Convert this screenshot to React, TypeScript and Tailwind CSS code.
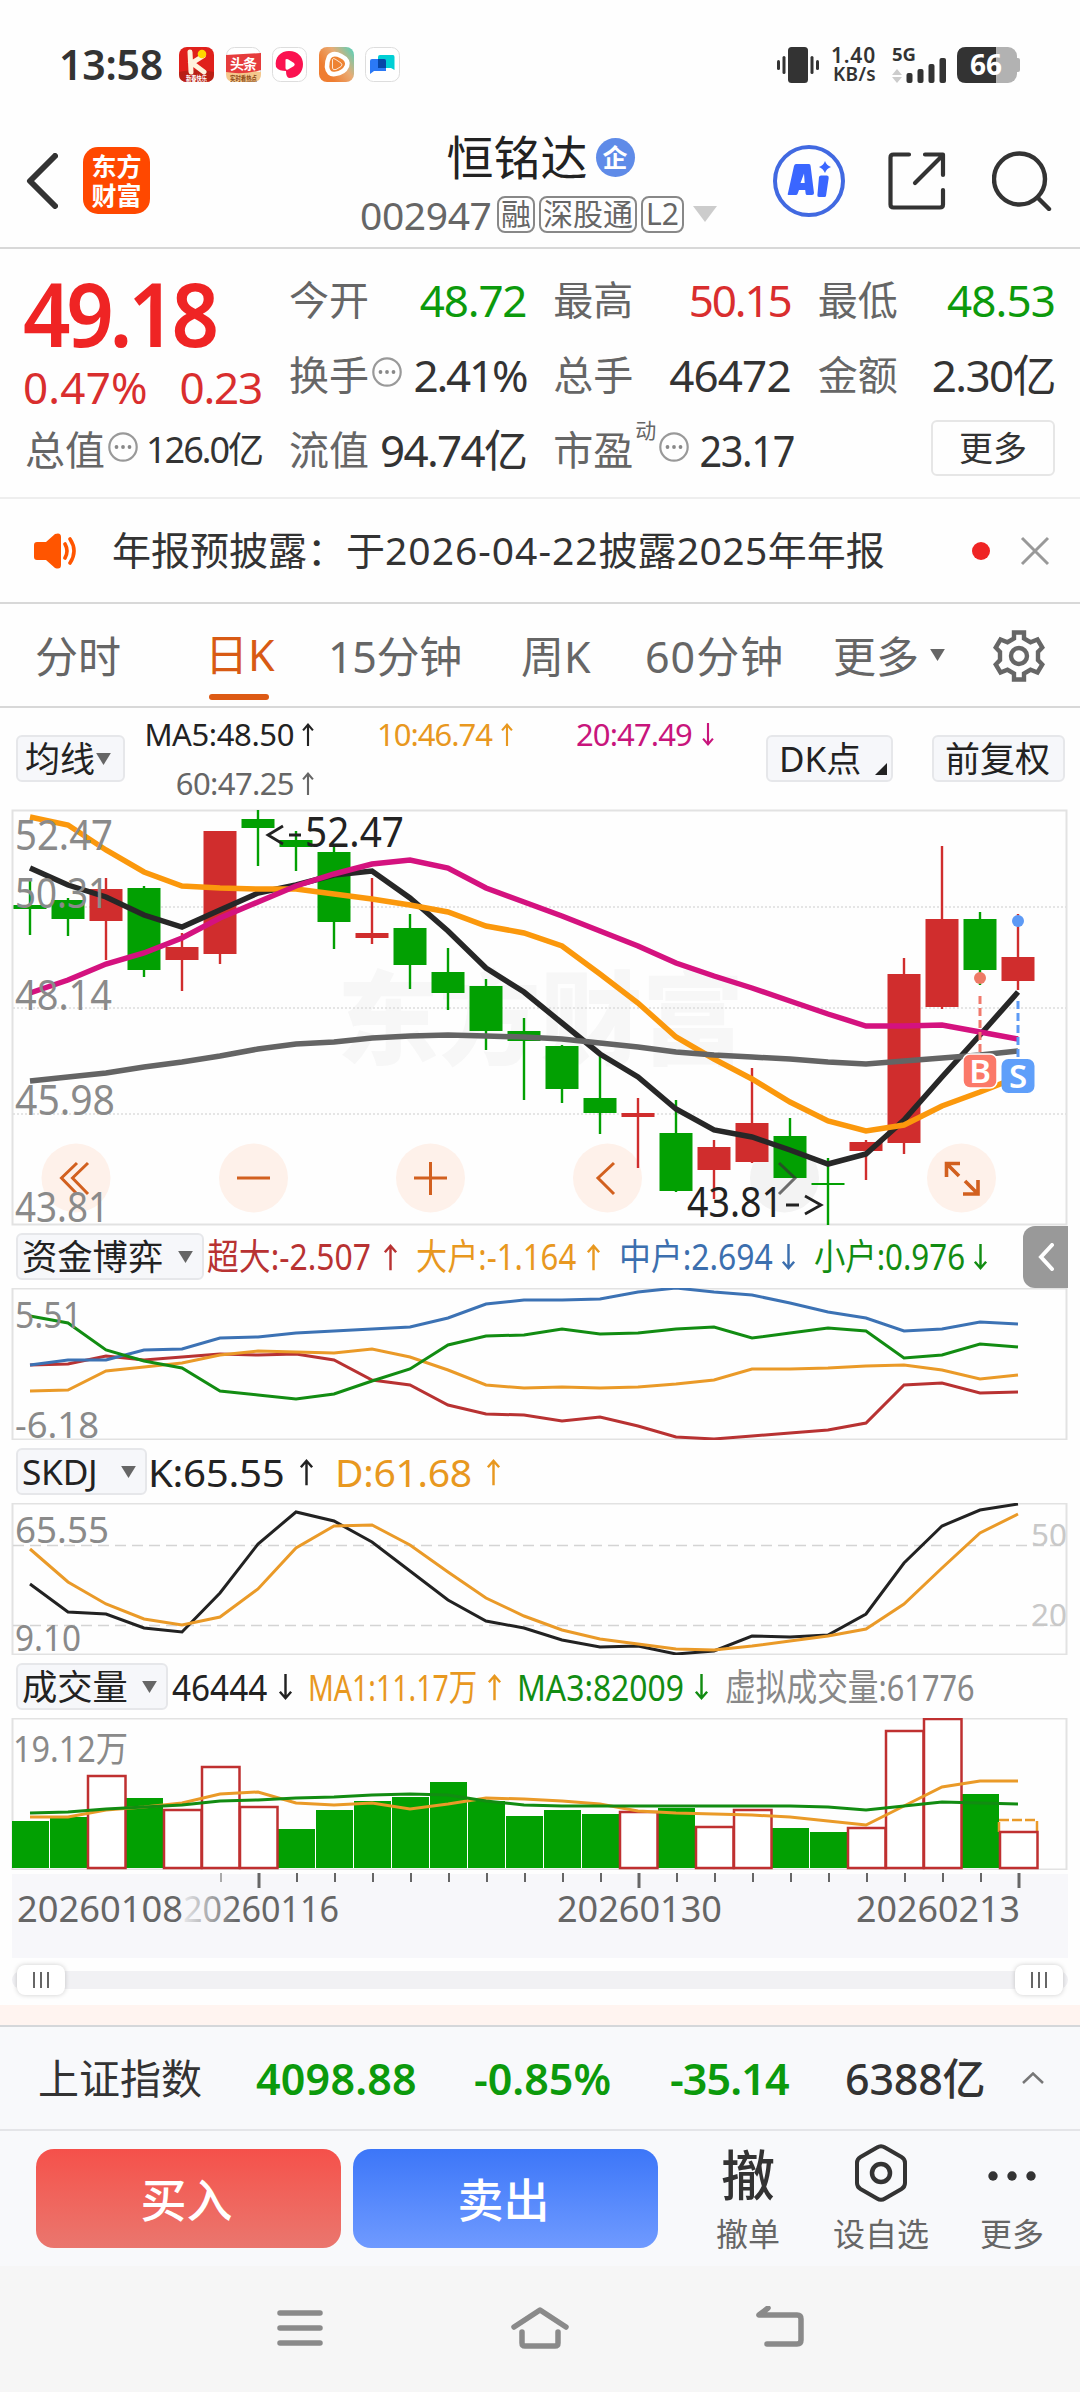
import type { ReactNode } from 'react';

const GREEN = '#02a002';
const RED = '#d02d2d';
const FONT = '"Noto Sans", "Noto Sans CJK SC", sans-serif';

// x centre of the n-th trading day, shared by every chart
const dayX = (i: number) => 30 + i * 38;

const toPoints = (values: number[]) => values.map((v, i) => `${dayX(i)},${v}`).join(' ');

// up?, high, body top, body bottom, low
const candles: [boolean, number, number, number, number][] = [
  [false, 70, 95, 99, 125],
  [false, 88, 90, 109, 126],
  [true, 68, 79, 111, 150],
  [false, 76, 78, 160, 167],
  [true, 123, 137, 150, 181],
  [true, 21, 21, 144, 154],
  [false, 0, 9, 18, 56],
  [false, 21, 30, 37, 61],
  [false, 37, 42, 112, 139],
  [true, 68, 123, 128, 134],
  [false, 104, 118, 155, 179],
  [false, 138, 162, 183, 200],
  [false, 169, 176, 221, 240],
  [false, 208, 221, 231, 290],
  [false, 235, 236, 279, 293],
  [false, 245, 288, 303, 324],
  [true, 288, 303, 307, 358],
  [false, 290, 323, 381, 382],
  [true, 330, 337, 360, 389],
  [true, 258, 313, 352, 353],
  [false, 308, 326, 368, 368],
  [false, 348, 373, 375, 415],
  [true, 330, 332, 341, 370],
  [true, 148, 164, 333, 344],
  [true, 36, 109, 197, 199],
  [false, 102, 109, 160, 175],
  [true, 104, 147, 171, 180],
];

const ma5 = [58, 75, 87, 105, 117, 100, 83, 75, 65, 61, 88, 121, 158, 182, 213, 244, 267, 299, 320, 327, 340, 354, 344, 310, 267, 225, 182];
const ma10 = [7, 15, 40, 62, 76, 78, 79, 79, 84, 89, 95, 102, 116, 123, 136, 164, 193, 227, 249, 269, 292, 311, 321, 315, 296, 282, 267];
const ma20 = [183, 170, 154, 143, 128, 108, 92, 76, 64, 54, 50, 58, 78, 92, 106, 121, 136, 153, 166, 178, 191, 204, 216, 216, 215, 222, 229];
const ma60 = [271, 267, 263, 257, 252, 246, 239, 234, 232, 228, 226, 225, 226, 227, 229, 233, 237, 242, 245, 247, 249, 252, 254, 251, 248, 245, 241];

const fundXL = [77, 76, 68, 72, 69, 66, 67, 66, 72, 92, 97, 117, 126, 127, 133, 129, 138, 149, 151, 148, 145, 142, 135, 97, 95, 105, 104];
const fundL = [103, 102, 83, 79, 75, 67, 63, 64, 65, 61, 69, 82, 97, 100, 99, 100, 99, 96, 92, 81, 81, 80, 78, 77, 82, 91, 87];
const fundM = [77, 72, 72, 62, 61, 50, 49, 45, 43, 41, 39, 30, 16, 12, 12, 11, 4, 0, 4, 7, 15, 24, 30, 43, 41, 34, 36];
const fundS = [28, 35, 62, 73, 80, 103, 107, 111, 106, 93, 81, 57, 48, 47, 41, 46, 45, 41, 39, 50, 45, 40, 43, 70, 67, 56, 59];

const skdjK = [81, 109, 111, 125, 129, 90, 41, 9, 18, 39, 68, 97, 118, 125, 137, 144, 143, 151, 148, 133, 134, 132, 111, 60, 23, 7, 1];
const skdjD = [46, 79, 101, 116, 122, 114, 86, 45, 23, 22, 42, 69, 95, 113, 127, 136, 141, 146, 147, 143, 138, 133, 126, 101, 65, 30, 11];

// up?, bar top
const volumes: [boolean, number][] = [
  [false, 103], [false, 99], [true, 58], [false, 80], [true, 92], [true, 49], [true, 89],
  [false, 111], [false, 92], [false, 83], [false, 79], [false, 64], [false, 83], [false, 98],
  [false, 92], [false, 96], [true, 94], [false, 90], [true, 109], [true, 92], [false, 110],
  [false, 114], [true, 110], [true, 13], [true, 1], [false, 76], [true, 114],
];
const volMa1 = [99, 99, 92, 89, 85, 76, 74, 85, 87, 85, 91, 86, 80, 81, 83, 86, 93, 95, 96, 97, 99, 103, 107, 88, 69, 63, 63];
const volMa3 = [95, 94, 91, 89, 87, 83, 82, 80, 79, 77, 76, 77, 83, 87, 88, 88, 88, 88, 88, 88, 88, 89, 92, 88, 84, 85, 86];

function Line({ values, color, width = 3 }: { values: number[]; color: string; width?: number }) {
  return <polyline points={toPoints(values)} fill="none" stroke={color} strokeWidth={width} />;
}

type LabelProps = { x: number; y: number; w: number; size?: number; color?: string; children: string };

function Label({ x, y, w, size = 36, color = '#8a8a8a', children }: LabelProps) {
  return (
    <text x={x} y={y} fontSize={size} fill={color} textLength={w} lengthAdjust="spacingAndGlyphs">
      {children}
    </text>
  );
}

function Frame({ height }: { height: number }) {
  return <rect x="12.5" y="0.5" width="1054" height={height - 1} fill="none" stroke="#e2e2e2" strokeWidth="2" />;
}

function Triangle({ className = '' }: { className?: string }) {
  return (
    <svg viewBox="0 0 16 13" className={`w-[15px] h-3 shrink-0 ${className}`}>
      <path d="M0 0H16L8 13Z" fill="currentColor" />
    </svg>
  );
}

function Arrow({ down = false, className = 'w-4 h-7' }: { down?: boolean; className?: string }) {
  return (
    <svg viewBox="0 0 16 28" className={`shrink-0 ${className} ${down ? 'rotate-180' : ''}`}>
      <path d="M8 28V2M2 9L8 2L14 9" fill="none" stroke="currentColor" strokeWidth="2.6" />
    </svg>
  );
}

function Dots() {
  return (
    <svg viewBox="0 0 30 30" className="w-[30px] h-[30px] mb-1.5 shrink-0">
      <circle cx="15" cy="15" r="13.7" fill="none" stroke="#999" strokeWidth="2.2" />
      <circle cx="8.5" cy="15" r="1.9" fill="#888" />
      <circle cx="15" cy="15" r="1.9" fill="#888" />
      <circle cx="21.5" cy="15" r="1.9" fill="#888" />
    </svg>
  );
}

function StatusBar() {
  return (
    <div className="h-[100px] pt-[29px] pl-[59px] pr-[60px] flex items-center justify-between text-[#333]">
      <div className="flex items-center h-9">
        <span className="w-[120px] text-[41px] font-semibold tracking-[-0.2px]">13:58</span>
        <div className="flex gap-[11.6px]">
          <svg viewBox="0 0 35 35" className="w-[35px] h-[35px]">
            <rect width="35" height="35" rx="8" fill="#e0201b" />
            <path d="M0 25Q17 21 35 25V27Q35 35 27 35H8Q0 35 0 27Z" fill="#b92016" />
            <path d="M11 5L12 25M24 9L13 16L25 25" stroke="#fff3dc" strokeWidth="5" strokeLinecap="round" fill="none" />
            <circle cx="23" cy="7" r="4.3" fill="#ffd800" />
            <text x="7" y="34" fontSize="7" fontWeight="700" fill="#fff" textLength="21" lengthAdjust="spacingAndGlyphs">新春快乐</text>
          </svg>
          <svg viewBox="0 0 35 35" className="w-[35px] h-[35px]">
            <rect x="0.5" y="0.5" width="34" height="34" rx="8" fill="#fff" stroke="#ddd" />
            <path d="M0 25Q17 22 35 25V27Q35 35 27 35H8Q0 35 0 27Z" fill="#f5c88c" />
            <path d="M0 8L35 6V23Q17 28 0 25Z" fill="#e63c3c" />
            <text x="4" y="22" fontSize="14" fontWeight="700" fill="#fff" textLength="27">头条</text>
            <text x="4" y="34" fontSize="6.5" fontWeight="700" fill="#8b4a16" textLength="27" lengthAdjust="spacingAndGlyphs">实时看热点</text>
          </svg>
          <svg viewBox="0 0 35 35" className="w-[35px] h-[35px]">
            <rect x="0.5" y="0.5" width="34" height="34" rx="8" fill="#fff" stroke="#ddd" />
            <path d="M4 20C2 10 9 4 17 4C26 4 31 10 31 17C31 25 26 31 17 31Q14 30 14 24C10 24 6 23 4 20Z" fill="#fb1250" />
            <path d="M13.5 12.5Q14.5 11.5 16 12.3L22 16Q23.5 17.5 22 19L16 22.5Q13.5 23.5 13.5 21Z" fill="#fff" />
          </svg>
          <svg viewBox="0 0 35 35" className="w-[35px] h-[35px]">
            <defs>
              <linearGradient id="play" x1="0" y1="0.8" x2="1" y2="0.1">
                <stop offset="0.2" stopColor="#ef7d31" />
                <stop offset="0.6" stopColor="#e9ab74" />
                <stop offset="1" stopColor="#5cd0b8" />
              </linearGradient>
            </defs>
            <rect width="35" height="35" rx="8" fill="url(#play)" />
            <path d="M10 10Q14 5 22 9Q30 13 28 19Q25 26 16 27Q9 28 8 20Q8 14 10 10Z" fill="#ee8332" stroke="#fff" strokeWidth="4.6" />
            <path d="M13.5 12.5Q14 11 16 12L22 16Q24 18 22 19.5L17 22.5Q13.5 23.500 13.5 21Z" fill="#ee8332" stroke="#fff" strokeWidth="0.8" />
          </svg>
          <svg viewBox="0 0 35 35" className="w-[35px] h-[35px]">
            <rect x="0.5" y="0.5" width="34" height="34" rx="8" fill="#fff" stroke="#ddd" />
            <path d="M13 10Q13 8 15 8H28Q29.5 8 29.5 10V23L26 21H13Z" fill="#00cfd5" />
            <path d="M5 14Q5 12 7 12H19Q21 12 21 14V24H9L5 27Z" fill="#2b79f6" />
            <path d="M13 12H19Q21 12 21 14V21H13Z" fill="#0646a8" />
          </svg>
        </div>
      </div>

      <div className="flex items-center h-9">
        <svg viewBox="0 0 42 36" className="w-[42px] h-9" fill="#333">
          <rect x="11" width="20" height="36" rx="3.5" />
          <rect x="0" y="13" width="3" height="10" rx="1.5" />
          <rect x="5.5" y="9" width="3" height="18" rx="1.5" />
          <rect x="33.5" y="9" width="3" height="18" rx="1.5" />
          <rect x="39" y="13" width="3" height="10" rx="1.5" />
        </svg>
        <div className="w-[45px] ml-[12px] flex flex-col items-end font-semibold">
          <span className="text-[21px] leading-[19px] tracking-[0.8px]">1.40</span>
          <span className="text-[19px] leading-[19px] tracking-[0.3px]">KB/s</span>
        </div>
        <svg viewBox="0 0 54 36" className="w-[54px] h-9 ml-4" fill="#333">
          <text x="0" y="14" fontSize="18.5" fontWeight="700" textLength="24">5G</text>
          <path d="M0 28L5 22L10 28ZM0 30H10L5 36Z" fill="#ccc" />
          <rect x="14.5" y="26" width="6" height="10" rx="2" />
          <rect x="25.5" y="22" width="6" height="14" rx="2" />
          <rect x="36.5" y="17" width="6" height="19" rx="2" />
          <rect x="47.5" y="11" width="6.5" height="25" rx="2" />
        </svg>
        <svg viewBox="0 0 63 36" className="w-[63px] h-9 ml-[11px]">
          <rect width="60" height="36" rx="9" fill="#b2b2b2" />
          <rect x="58" y="11" width="5" height="14" rx="2" fill="#b2b2b2" />
          <path d="M39 0H9Q0 0 0 9V27Q0 36 9 36H39Z" fill="#333" />
          <text x="13" y="27.5" fontSize="28" fontWeight="700" fill="#fff" textLength="32">66</text>
        </svg>
      </div>
    </div>
  );
}

function Tag({ children, className }: { children: ReactNode; className: string }) {
  return (
    <span className={`h-[37px] flex items-center justify-center border-2 border-[#888] rounded-lg text-[30px] text-[#666] ${className}`}>
      {children}
    </span>
  );
}

function Header() {
  return (
    <header className="h-[149px] border-b-2 border-[#d8d8d8] flex items-start pl-[26px] pr-[28px]">
      <div className="w-[334px] pt-[47px] flex items-center gap-[25px]">
        <svg viewBox="0 0 32 56" className="w-8 h-14">
          <path d="M29 3L4 28L29 53" fill="none" stroke="#333" strokeWidth="6" strokeLinecap="round" strokeLinejoin="round" />
        </svg>
        <div className="w-[67px] h-[67px] rounded-[15px] bg-[#ff4800] text-white text-[25px] leading-[29px] font-bold flex flex-col items-center justify-center">
          <span>东方</span>
          <span>财富</span>
        </div>
      </div>

      <div className="w-[357px] pt-[35px] flex flex-col items-center">
        <div className="h-[44px] ml-1 flex items-center gap-2">
          <h1 className="text-[47px] text-[#222]">恒铭达</h1>
          <span className="w-[39px] h-[39px] rounded-full bg-[#5f8be8] text-white text-[25px] font-bold flex items-center justify-center">企</span>
        </div>
        <div className="h-9 mt-[17px] flex items-center">
          <span className="w-[137px] text-[39px] text-[#666] tracking-[-0.4px]">002947</span>
          <Tag className="w-[38px]">融</Tag>
          <Tag className="w-[98px] ml-1">深股通</Tag>
          <Tag className="w-[43px] ml-1">L2</Tag>
          <svg viewBox="0 0 24 16" className="w-6 h-4 ml-[9px]">
            <path d="M0 0H24L12 16Z" fill="#ccc" />
          </svg>
        </div>
      </div>

      <div className="pt-[45px] ml-auto flex items-center">
        <svg viewBox="0 0 72 72" className="w-[72px] h-[72px]">
          <circle cx="36" cy="36" r="34" fill="none" stroke="#4169e1" strokeWidth="4" />
          <path fillRule="evenodd" d="M23 19H36Q37.5 19 37.6 21L41 48Q41 50 39 50H34Q33 50 32.7 49L32.2 45H26L24.5 49Q24 50 23 50H16Q14 50 15 48L21 21Q21.6 19 23 19ZM27.5 38H31.7L31 28.5Z" fill="#3a66ff" />
          <path d="M48 30.5H54Q56 30.5 55.7 33L53 51Q52.8 52 51.5 52H46Q44 52 44.4 50L46 32Q46.3 30.5 48 30.5Z" fill="#3a66ff" />
          <path d="M52 16Q53.5 20.5 58 22Q53.5 23.5 52 28Q50 23.5 46 22Q50.5 20.5 52 16Z" fill="#3a66ff" />
        </svg>
        <svg viewBox="0 0 58 58" className="w-[58px] h-[58px] ml-[43px]" fill="none" stroke="#333" strokeWidth="4.2" strokeLinecap="round" strokeLinejoin="round">
          <path d="M21 2.5H5.5Q2.5 2.5 2.5 5.5V52.5Q2.5 55.5 5.5 55.5H52Q55 55.5 55 52.5V38" />
          <path d="M37 2.5H55V23M54 4L27 31" />
        </svg>
        <svg viewBox="0 0 60 60" className="w-[60px] h-[60px] ml-[46px]" fill="none" stroke="#333" strokeWidth="4.4" strokeLinecap="round">
          <circle cx="27.5" cy="28" r="25.5" />
          <path d="M46 47L57 58" />
        </svg>
      </div>
    </header>
  );
}

function Quote({ label, value, className = 'text-[#333] tracking-[-0.9px]', info = false }: { label: string; value: string; className?: string; info?: boolean }) {
  return (
    <div className="h-[75px] flex items-center whitespace-nowrap">
      <span className="text-[40px] text-[#666]">{label}</span>
      {info && <span className="ml-[3px]"><Dots /></span>}
      <span className={`ml-auto text-[44px] ${className}`}>{value}</span>
    </div>
  );
}

function QuotePanel() {
  return (
    <section className="h-[250px] pt-[13px] pl-[25px] pr-[25px] border-b-2 border-[#eee] flex gap-[27px]">
      <div className="w-[237px]">
        <div className="h-[100px] flex items-center text-[89px] font-semibold text-[#ef2424] tracking-[-4.6px]">
          <span className="-ml-0.5 origin-left scale-x-[0.935]">49.18</span>
        </div>
        <div className="h-[50px] flex items-center justify-between text-[44px] text-[#d92e2e]">
          <span className="-ml-0.5 tracking-[0.2px]">0.47%</span>
          <span className="tracking-[-1.2px]">0.23</span>
        </div>
        <div className="h-[75px] flex items-center whitespace-nowrap">
          <span className="text-[40px] text-[#666]">总值</span>
          <span className="ml-[3px]"><Dots /></span>
          <span className="ml-auto text-[36px] tracking-[-2px] text-[#333]">126.0亿</span>
        </div>
      </div>
      <div className="flex-1 grid grid-cols-3 gap-x-[27px] content-start">
        <Quote label="今开" value="48.72" className="text-[#0c9a0c] tracking-[-1.2px]" />
        <Quote label="最高" value="50.15" className="text-[#d92e2e] tracking-[-2.1px]" />
        <Quote label="最低" value="48.53" className="text-[#0c9a0c] tracking-[-0.9px]" />
        <Quote label="换手" value="2.41%" className="text-[#333] tracking-[-2.2px]" info />
        <Quote label="总手" value="46472" />
        <Quote label="金额" value="2.30亿" className="text-[#333] tracking-[-1.6px]" />
        <Quote label="流值" value="94.74亿" className="text-[#333] tracking-[-1.7px]" />
        <div className="h-[75px] flex items-center whitespace-nowrap">
          <span className="text-[40px] text-[#666]">市盈</span>
          <span className="w-[22px] ml-0.5 mr-[3px] mb-[38px] text-[21px] text-[#666]">动</span>
          <Dots />
          <span className="ml-auto origin-right scale-x-[0.9] text-[44px] tracking-[-1.5px] text-[#333]">23.17</span>
        </div>
        <div className="h-[75px] flex items-center justify-end">
          <button className="w-[124px] h-[56px] mt-[-4px] border-2 border-[#e6e6e6] rounded-md text-[34px] text-[#333]">更多</button>
        </div>
      </div>
    </section>
  );
}

function Notice() {
  return (
    <section className="h-[105px] pl-[34px] pr-[30px] border-b-2 border-[#d8d8d8] flex items-center">
      <svg viewBox="0 0 45 36" className="w-[45px] h-9" fill="#ff5500">
        <path d="M3 9H12L21 1Q27 -1 27 4V32Q27 37 21 35L12 27H3Q0 27 0 24V12Q0 9 3 9Z" />
        <path d="M31 11Q35 18 31 25M36 6Q44 18 36 30" fill="none" stroke="#ff5500" strokeWidth="3.6" strokeLinecap="round" />
      </svg>
      <p className="ml-[33px] mb-0.5 text-[39px] text-[#333] whitespace-nowrap">
        年报预披露：于<span className="tracking-[1px]">2026-04-22</span>披露<span className="tracking-[0.5px]">2025</span>年年报
      </p>
      <span className="w-[18px] h-[18px] ml-auto rounded-full bg-[#ef2424]" />
      <svg viewBox="0 0 30 30" className="w-[30px] h-[30px] ml-[30px]">
        <path d="M2 2L28 28M28 2L2 28" stroke="#999" strokeWidth="3" />
      </svg>
    </section>
  );
}

function Tabs() {
  return (
    <nav className="h-[104px] pl-[35px] border-b-2 border-[#d8d8d8] flex items-center text-[43px] text-[#666] whitespace-nowrap">
      <span className="w-[169px] mt-0.5">分时</span>
      <span className="w-[124px] h-[78px] mt-[11px] pl-px flex flex-col justify-between text-[#d85a14]">
        <span className="mt-[11px]">日K</span>
        <span className="w-[60px] h-1.5 ml-1 rounded-full bg-[#dd5a14]" />
      </span>
      <span className="w-[193px] mt-0.5 tracking-[-0.3px]">15分钟</span>
      <span className="w-[124px] mt-0.5">周K</span>
      <span className="w-[188px] mt-0.5 tracking-[1px]">60分钟</span>
      <span className="w-[97px] mt-0.5">更多</span>
      <Triangle />
      <svg viewBox="0 0 52 52" className="w-[52px] h-[52px] ml-[48px] mt-0.5" fill="none" stroke="#666" strokeWidth="4.4">
        <path d="M21 2.5H31V8.5L37.5 12.2L44.5 9.5L49.3 17.5L45 22V30L49.3 34.5L44.5 42.5L37.5 39.8L31 43.5V49.5H21V43.5L14.5 39.8L7.5 42.5L2.7 34.5L7 30V22L2.7 17.5L7.5 9.5L14.5 12.2L21 8.5Z" />
        <circle cx="26" cy="26" r="8" />
      </svg>
    </nav>
  );
}

function MaLegend() {
  return (
    <div className="h-[102px] pl-[16px] pr-[15px] flex items-start whitespace-nowrap">
      <button className="w-[109px] h-[47px] mt-[27px] pl-[7px] flex items-center gap-0.5 border-2 border-[#e6e7ea] rounded-md bg-[#f6f7fa] text-[35px] text-[#222]">
        均线 <Triangle className="-ml-px text-[#666]" />
      </button>
      <div className="w-[174px] ml-4 mt-[11px] flex flex-col items-end gap-[18px] text-[31px]">
        <span className="flex items-center gap-[7px] tracking-[-0.4px] text-[#222]">MA5:48.50<Arrow className="w-3.5 h-[23px]" /></span>
        <span className="flex items-center gap-[7px] tracking-[-0.6px] text-[#666]">60:47.25<Arrow className="w-3.5 h-[23px]" /></span>
      </div>
      <span className="w-[137px] ml-[62px] mt-[11px] flex items-center justify-between text-[31px] tracking-[-1px] text-[#e8981f]">
        10:46.74<Arrow className="w-3.5 h-[23px]" />
      </span>
      <span className="w-[139px] ml-[62px] mt-[11px] flex items-center justify-between text-[31px] tracking-[-0.9px] text-[#c8157c]">
        20:47.49<Arrow down className="w-3.5 h-[23px]" />
      </span>
      <button className="w-[127px] h-[47px] ml-auto mt-[27px] pl-[11px] pr-1 flex items-center justify-between border-2 border-[#e6e7ea] rounded-md bg-[#f6f7fa] text-[35px] text-[#222]">
        DK点
        <svg viewBox="0 0 12 12" className="w-3 h-3 mt-[20px]"><path d="M12 0V12H0Z" fill="#222" /></svg>
      </button>
      <button className="w-[133px] h-[47px] ml-[39px] mt-[27px] pr-0.5 border-2 border-[#e6e7ea] rounded-md bg-[#f6f7fa] text-[35px] text-[#222]">前复权</button>
    </div>
  );
}

function CandleChart() {
  return (
    <svg viewBox="0 0 1080 415" className="block w-[1080px] h-[415px] overflow-visible">
      <text x="337" y="247" fontSize="102" fontWeight="900" fill="#f7f7f7" textLength="407">东方财富</text>
      <Frame height={415} />
      {[97, 198, 304].map((y) => (
        <path key={y} d={`M13 ${y}H1066`} stroke="#ddd" strokeWidth="1.5" strokeDasharray="2 2" />
      ))}

      {[76, 253.5, 430.5, 607.5, 961.5].map((x) => (
        <circle key={x} cx={x} cy="368" r="34.5" fill="#fef1ea" />
      ))}
      <circle cx="784.5" cy="368" r="34.5" fill="#f3f3f3" />

      {candles.map(([up, high, top, bottom, low], i) => (
        <g key={i} fill={up ? RED : GREEN}>
          <rect x={dayX(i) - 1.2} y={high} width="2.4" height={low - high} />
          <rect x={dayX(i) - 16.5} y={top} width="33" height={bottom - top} />
        </g>
      ))}

      <Line values={ma5} color="#272727" width={5.5} />
      <Line values={ma10} color="#fb980c" width={5.5} />
      <Line values={ma20} color="#d4127f" width={5.5} />
      <Line values={ma60} color="#646464" width={5.5} />

      {/* zoom and pan controls */}
      <g fill="none" stroke="#d2601f" strokeWidth="3">
        <path d="M77 353L61.5 368L77 384M88 353L72.5 368L88 384" />
        <path d="M237 368H270" />
        <path d="M414 368H447M430.5 352V385" />
        <path d="M614 353L598 368L614 384" />
        <path d="M946.500 367V353.5H960M947 354L959 366M978 370V384H963M977 383L965 371" strokeWidth="3.6" />
      </g>
      <path d="M779 353L795 368L779 384" fill="none" stroke="#333" strokeOpacity="0.7" strokeWidth="3" />

      <Label x={15} y={40} w={98} size={41}>52.47</Label>
      <Label x={15} y={98} w={94} size={41}>50.31</Label>
      <Label x={15} y={200} w={97} size={41}>48.14</Label>
      <Label x={15} y={305} w={100} size={41}>45.98</Label>
      <Label x={15} y={412} w={94} size={41}>43.81</Label>
      <path d="M283 16L268 25L283 34M289 25H301" fill="none" stroke="#222" strokeWidth="2.8" />
      <Label x={305} y={37} w={99} size={41} color="#222">52.47</Label>
      <Label x={687} y={407} w={96} size={41} color="#222">43.81</Label>
      <path d="M786 395H799M805 386L821 395L805 404" fill="none" stroke="#222" strokeWidth="2.8" />

      {/* buy / sell marks */}
      <circle cx="980" cy="168" r="6" fill="#ee7a66" />
      <circle cx="1018" cy="111" r="6" fill="#5d9af5" />
      <path d="M980 186V246" stroke="#f0796c" strokeWidth="3" strokeDasharray="8 4" />
      <path d="M1018 191V250" stroke="#5d9af5" strokeWidth="3" strokeDasharray="8 4" />
      <rect x="963" y="244" width="34" height="34" rx="7" fill="#fb7969" stroke="#fff" strokeWidth="1.5" />
      <rect x="1001.5" y="249" width="33" height="34" rx="7" fill="#5f9ffa" />
      <text x="980" y="273" fontSize="33" fontWeight="600" fill="#fff" textAnchor="middle">B</text>
      <text x="1018" y="278" fontSize="33" fontWeight="600" fill="#fff" textAnchor="middle">S</text>
    </svg>
  );
}

function Picker({ children, className }: { children: ReactNode; className: string }) {
  return (
    <button className={`h-[47px] pl-1 pr-[9px] flex items-center justify-between border-2 border-[#e6e7ea] rounded-md bg-[#f6f7fa] text-[35.3px] text-[#222] shrink-0 ${className}`}>
      {children}
      <Triangle className="text-[#666]" />
    </button>
  );
}

function Entry({ text, dir, className, scale }: { text: string; dir?: 'up' | 'down'; className: string; scale: string }) {
  return (
    <span className={`flex items-center justify-between shrink-0 ${className}`}>
      <span className="w-0"><span className={`inline-block origin-left ${scale}`}>{text}</span></span>
      {dir && <Arrow down={dir === 'down'} className="w-[15px] h-7" />}
    </span>
  );
}

function FundChart() {
  return (
    <section>
      <div className="h-[63px] pl-4 flex items-center text-[36px] whitespace-nowrap">
        <Picker className="w-[188px]">资金博弈</Picker>
        <Entry text="超大:-2.507" dir="up" className="w-[191px] ml-[3px] text-[#b83232]" scale="scale-x-[0.885]" />
        <Entry text="大户:-1.164" dir="up" className="w-[185px] ml-[18px] text-[#e8981f]" scale="scale-x-[0.865]" />
        <Entry text="中户:2.694" dir="down" className="w-[177px] ml-[18px] text-[#3c6fae]" scale="scale-x-[0.885]" />
        <Entry text="小户:0.976" dir="down" className="w-[174px] ml-[18px] text-[#128c12]" scale="scale-x-[0.870]" />
        <span className="w-[45px] h-[62px] ml-auto mr-3 rounded-l-xl bg-[#999] flex items-center justify-center">
          <svg viewBox="0 0 16 28" className="w-4 h-7">
            <path d="M14 2L3 14L14 26" fill="none" stroke="#fff" strokeWidth="4" strokeLinecap="round" />
          </svg>
        </span>
      </div>
      <svg viewBox="0 0 1080 152" className="block w-[1080px] h-[152px]">
        <Frame height={152} />
        <Line values={fundXL} color="#b83232" />
        <Line values={fundL} color="#ea9a28" />
        <Line values={fundM} color="#3c72b4" />
        <Line values={fundS} color="#128c12" />
        <Label x={15} y={40} w={67}>5.51</Label>
        <Label x={15} y={150} w={84}>-6.18</Label>
      </svg>
    </section>
  );
}

function SkdjChart() {
  return (
    <section>
      <div className="h-[63px] pl-4 flex items-center text-[38px] tracking-[-0.3px] whitespace-nowrap">
        <Picker className="w-[131px]">SKDJ</Picker>
        <Entry text="K:65.55" dir="up" className="w-[166px] ml-[1px] text-[#222]" scale="scale-x-[1.06]" />
        <Entry text="D:61.68" dir="up" className="w-[166px] ml-[21px] text-[#e8981f]" scale="scale-x-[1.03]" />
      </div>
      <svg viewBox="0 0 1080 152" className="block w-[1080px] h-[152px]">
        <Frame height={152} />
        <path d="M13 42.5H1066M13 122.5H1066" stroke="#d4d4d4" strokeWidth="1.5" strokeDasharray="11 6" />
        <Label x={1031} y={43} w={36} size={30} color="#c8c8c8">50</Label>
        <Label x={1031} y={123} w={36} size={30} color="#c8c8c8">20</Label>
        <Label x={15} y={40} w={94}>65.55</Label>
        <Label x={15} y={148} w={66}>9.10</Label>
        <Line values={skdjK} color="#222" />
        <Line values={skdjD} color="#ea9a28" />
      </svg>
    </section>
  );
}

function VolumeChart() {
  return (
    <section>
      <div className="h-[63px] pl-4 flex items-center text-[37px] whitespace-nowrap">
        <Picker className="w-[152px]">成交量</Picker>
        <Entry text="46444" dir="down" className="w-[121px] ml-1 text-[#222]" scale="scale-x-[0.9]" />
        <Entry text="MA1:11.17万" dir="up" className="w-[194px] ml-[15px] text-[#e8981f]" scale="scale-x-[0.77]" />
        <Entry text="MA3:82009" dir="down" className="w-[192px] ml-[15px] text-[#128c12]" scale="scale-x-[0.86]" />
        <Entry text="虚拟成交量:61776" className="w-[248px] ml-[16px] text-[#888]" scale="scale-x-[0.83]" />
      </div>
      <svg viewBox="0 0 1080 152" className="block w-[1080px] h-[152px]">
        <Frame height={152} />
        {volumes.map(([up, top], i) =>
          up ? null : <rect key={i} x={dayX(i) - 18} y={top} width="37" height={150 - top} fill={GREEN} />
        )}
        <path d="M999 102H1037V114M999 104V114" fill="none" stroke="#ea9a28" strokeWidth="2.5" strokeDasharray="10 3" />
        {volumes.map(([up, top], i) =>
          up ? <rect key={i} x={dayX(i) - 18} y={top} width="37.5" height={150 - top} fill="#fff" stroke="#bf3030" strokeWidth="2.5" /> : null
        )}
        <Line values={volMa1} color="#ea9a28" />
        <Line values={volMa3} color="#128c12" />
        <Label x={13} y={44} w={115}>19.12万</Label>
      </svg>

      <svg viewBox="0 0 1080 88" className="block w-[1080px] h-[88px]">
        <defs>
          <linearGradient id="fade">
            <stop offset="0" stopColor="#666" stopOpacity="0.1" />
            <stop offset="0.35" stopColor="#666" />
          </linearGradient>
        </defs>
        <rect x="12" y="4" width="1056" height="84" fill="#f7f7fa" />
        {volumes.map((_, i) => {
          if (i < 5) return null;
          const long = i % 10 === 6;
          return <path key={i} d={`M${dayX(i) + 1} 3V${long ? 18 : 12}`} stroke={i === 5 ? '#aaa' : '#666'} strokeWidth={long ? 3 : 2} />;
        })}
        <Label x={17} y={52} w={166} color="#666">20260108</Label>
        <Label x={183} y={52} w={156} color="url(#fade)">20260116</Label>
        <Label x={557} y={52} w={165} color="#666">20260130</Label>
        <Label x={856} y={52} w={164} color="#666">20260213</Label>
      </svg>
    </section>
  );
}

function Handle() {
  return (
    <span className="w-12 h-[30px] rounded-lg bg-white shadow-[0_0_5px_rgba(0,0,0,0.2)] flex items-center justify-center gap-[5px]">
      <i className="w-0.5 h-4 bg-[#666]" />
      <i className="w-0.5 h-4 bg-[#666]" />
      <i className="w-0.5 h-4 bg-[#666]" />
    </span>
  );
}

function RangeSlider() {
  return (
    <div className="h-[47px] px-3 pb-1 flex items-center">
      <div className="w-full h-[18px] px-[5px] rounded-full bg-[#f1f1f4] flex items-center justify-between">
        <Handle />
        <Handle />
      </div>
    </div>
  );
}

function IndexBar() {
  return (
    <div className="h-[106px] pl-[38px] pr-9 border-t-2 border-b-2 border-t-[#d5d7da] border-b-[#e4e5e8] bg-[#f8f9fb] flex items-center text-[43px] font-semibold text-[#0c9a0c] whitespace-nowrap">
      <span className="w-[218px] text-[41px] font-normal text-[#333]">上证指数</span>
      <span className="w-[218px] tracking-[0.2px]">4098.88</span>
      <span className="w-[196px]">-0.85%</span>
      <span className="w-[175px] tracking-[-0.9px]">-35.14</span>
      <span className="font-medium tracking-[-0.2px] text-[#333]">6388亿</span>
      <svg viewBox="0 0 22 12" className="w-[22px] h-3 ml-auto">
        <path d="M1 11L11 1.5L21 11" fill="none" stroke="#777" strokeWidth="2.5" />
      </svg>
    </div>
  );
}

function ActionBar() {
  return (
    <div className="h-[135px] pt-[18px] pl-9 pr-[29px] bg-[#f8f9fb] flex items-start">
      <button className="w-[305px] h-[99px] pr-1 rounded-[18px] bg-linear-to-b from-[#f5504a] to-[#ea766e] text-white text-[46px] font-medium">买入</button>
      <button className="w-[305px] h-[99px] ml-3 pr-1 rounded-[18px] bg-linear-to-b from-[#3c76f8] to-[#6f9aff] text-white text-[46px] font-medium">卖出</button>
      <div className="w-[80px] ml-[50px] h-[101px] flex flex-col items-center justify-between text-[32px] text-[#666]">
        <span className="-mt-px text-[54px] font-medium text-[#333]">撤</span>
        <span>撤单</span>
      </div>
      <div className="w-[110px] ml-[38px] h-[106px] -mt-[5px] flex flex-col items-center justify-between text-[32px] text-[#666]">
        <svg viewBox="0 0 54 58" className="w-[54px] h-[58px]" fill="none" stroke="#333">
          <path d="M23 3.5Q27 1 31 3.5L47.5 13Q51 15 51 19V39Q51 43 47.5 45L31 54.5Q27 57 23 54.5L6.5 45Q3 43 3 39V19Q3 15 6.5 13Z" strokeWidth="4" />
          <circle cx="27" cy="29" r="9" strokeWidth="4.5" />
        </svg>
        <span>设自选</span>
      </div>
      <div className="w-[80px] ml-auto -mr-px h-[101px] pt-[22px] flex flex-col items-center justify-between text-[32px] text-[#666]">
        <svg viewBox="0 0 48 10" className="w-12 h-2.5" fill="#333">
          <circle cx="5" cy="5" r="4.7" />
          <circle cx="24" cy="5" r="4.7" />
          <circle cx="43" cy="5" r="4.7" />
        </svg>
        <span>更多</span>
      </div>
    </div>
  );
}

function NavBar() {
  return (
    <div className="h-[126px] pl-[277px] pb-0.5 bg-[#f6f6f6] flex items-center text-[#8a8a8a]">
      <svg viewBox="0 0 46 44" className="w-[46px] h-11" fill="none" stroke="currentColor" strokeWidth="5.5" strokeLinecap="round">
        <path d="M3 7H43M3 22H43M3 37H43" />
      </svg>
      <svg viewBox="0 0 58 44" className="w-[58px] h-11 ml-[188px]" fill="none" stroke="currentColor" strokeWidth="5.5" strokeLinecap="round" strokeLinejoin="round">
        <path d="M3 21L29 4L55 21M11 26V37Q11 40 14 40H44Q47 40 47 37V26" />
      </svg>
      <svg viewBox="0 0 50 44" className="w-[50px] h-11 ml-[186px]" fill="none" stroke="currentColor" strokeWidth="5.5" strokeLinecap="round" strokeLinejoin="round">
        <path d="M13 2L4 9H42Q46 9 46 13V34Q46 38 42 38H12" />
      </svg>
    </div>
  );
}

export default function App() {
  return (
    <div className="w-[1080px] h-[2392px] overflow-hidden bg-[#f6f6f6] leading-none [&_button]:leading-none" style={{ fontFamily: FONT }}>
      <div className="bg-[#fefefe]">
        <StatusBar />
        <Header />
        <QuotePanel />
        <Notice />
        <Tabs />
        <MaLegend />
        <CandleChart />
        <FundChart />
        <SkdjChart />
        <VolumeChart />
        <RangeSlider />
      </div>
      <div className="h-5 bg-[#fff4f0]" />
      <IndexBar />
      <ActionBar />
      <NavBar />
    </div>
  );
}
